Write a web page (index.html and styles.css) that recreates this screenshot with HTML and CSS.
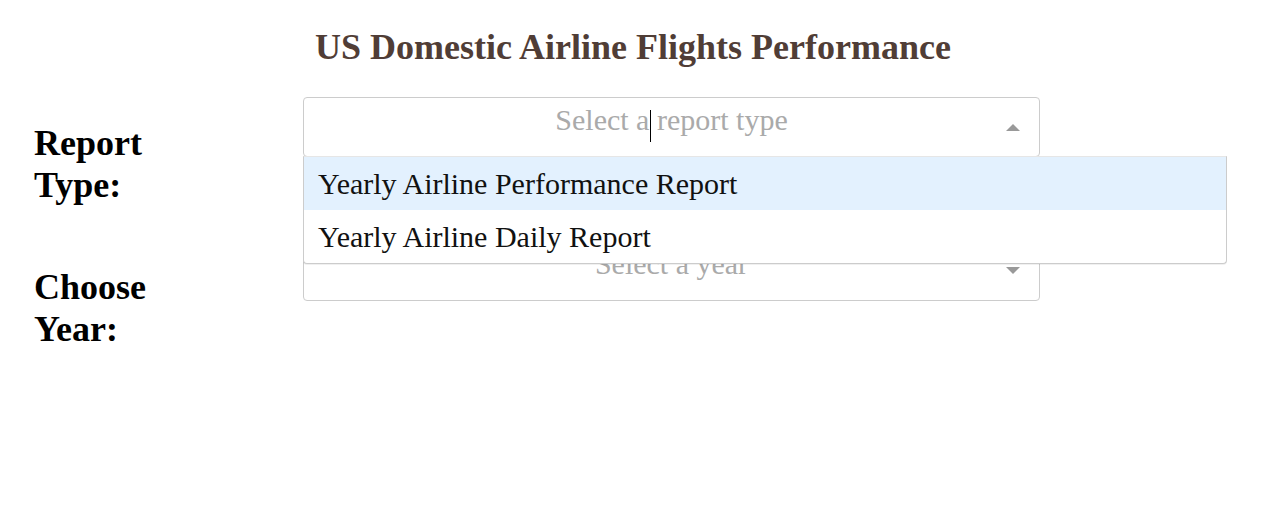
FILE: index.html
```html
<!DOCTYPE html>
<html>
<head>
<meta charset="utf-8">
<link rel="stylesheet" href="styles.css">
</head>
<body>
<div class="page">
  <h1 class="title">US Domestic Airline Flights Performance</h1>
  <div class="row row-top">
    <h2 class="label">Report Type:</h2>
    <div class="select is-open">
      <div class="control">
        <div class="value">
          <span class="placeholder">Select a report type</span>
          <span class="caret"></span>
        </div>
        <div class="arrow-zone"><span class="arrow up"></span></div>
      </div>
      <div class="menu">
        <div class="option focused">Yearly Airline Performance Report</div>
        <div class="option">Yearly Airline Daily Report</div>
      </div>
    </div>
  </div>
  <div class="row">
    <h2 class="label">Choose Year:</h2>
    <div class="select">
      <div class="control">
        <div class="value">
          <span class="placeholder">Select a year</span>
        </div>
        <div class="arrow-zone"><span class="arrow down"></span></div>
      </div>
    </div>
  </div>
</div>
</body>
</html>
```

FILE: styles.css
```css
html, body {
  margin: 0;
  padding: 0;
  background: #ffffff;
}

.page {
  padding: 0 8px;
  font-family: "Liberation Serif", "Times New Roman", serif;
}

.title {
  margin: 26px 0 29px;
  font-size: 36px;
  font-weight: bold;
  line-height: normal;
  text-align: center;
  color: #503D36;
}

.row {
  display: grid;
  grid-template-columns: 269px 737px;
  padding-left: 26px;
}

.row-top {
  position: relative;
  z-index: 2;
}

.label {
  margin: 25px 0 35px;
  width: 150px;
  font-size: 36px;
  font-weight: bold;
  line-height: 42px;
  color: #000000;
}

.select {
  position: relative;
}

.control {
  box-sizing: border-box;
  height: 60px;
  display: flex;
  align-items: flex-start;
  border: 1px solid #cccccc;
  border-radius: 4px;
  background: #ffffff;
}

.value {
  position: relative;
  flex: 1;
  line-height: 44px;
  font-size: 30px;
  text-align: center;
  padding-left: 41px;
}

.placeholder {
  color: #aaaaaa;
}

.caret {
  position: absolute;
  left: 346px;
  top: 12px;
  width: 1px;
  height: 32px;
  background: #000000;
}

.arrow-zone {
  width: 30px;
  height: 46px;
  padding-right: 11px;
  display: flex;
  align-items: center;
  justify-content: center;
}

.arrow {
  width: 0;
  height: 0;
  border-style: solid;
}

.arrow.up {
  border-width: 0 7px 7px;
  border-color: transparent transparent #999999;
  margin-top: 12px;
}

.arrow.down {
  border-width: 7px 7px 0;
  border-color: #999999 transparent transparent;
  margin-top: 10px;
}

.menu {
  position: absolute;
  left: 0;
  top: 59px;
  width: 924px;
  box-sizing: border-box;
  border: 1px solid #cccccc;
  border-top-color: #e6e6e6;
  border-radius: 0 0 4px 4px;
  background: #ffffff;
  box-shadow: 0 1px 0 rgba(0, 0, 0, 0.06);
  overflow: hidden;
}

.option {
  height: 53px;
  display: flex;
  align-items: center;
  padding: 0 14px;
  font-size: 30px;
  color: #111111;
  white-space: nowrap;
}

.option.focused {
  background: #e3f1fe;
}
```
